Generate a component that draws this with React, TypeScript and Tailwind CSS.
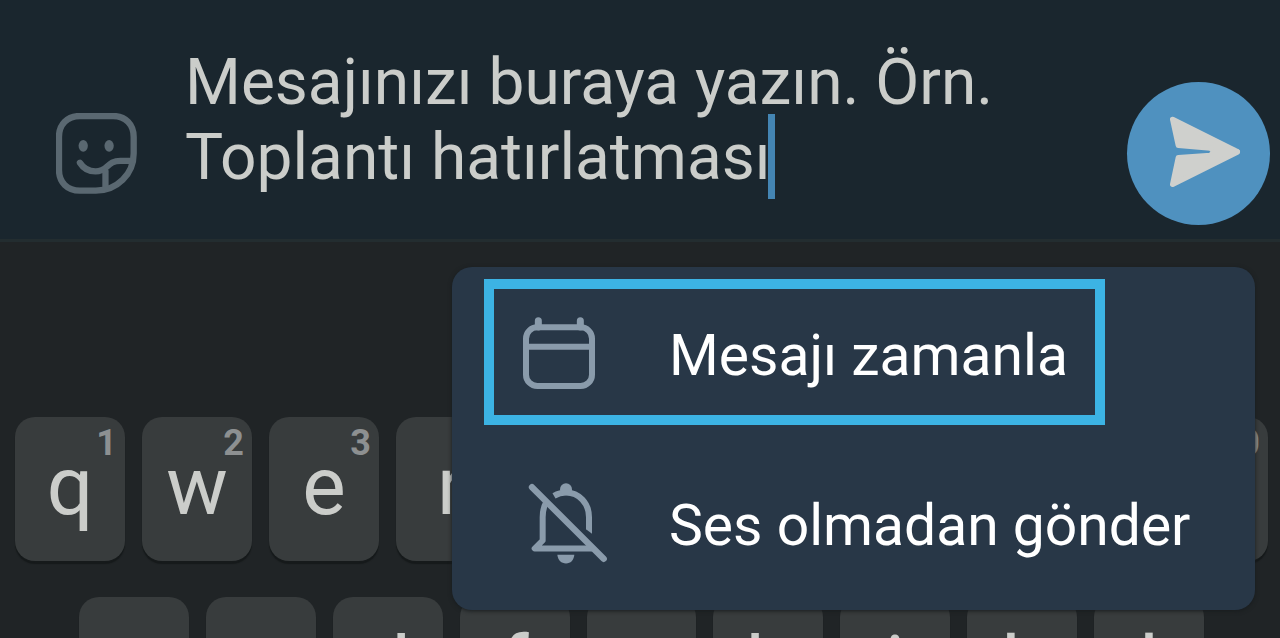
import React, { useState } from 'react';

const topRow = [
  { letter: 'q', digit: '1' },
  { letter: 'w', digit: '2' },
  { letter: 'e', digit: '3' },
  { letter: 'r', digit: '4' },
  { letter: 't', digit: '5' },
  { letter: 'y', digit: '6' },
  { letter: 'u', digit: '7' },
  { letter: 'i', digit: '8' },
  { letter: 'o', digit: '9' },
  { letter: 'p', digit: '0' },
];

const homeRow = ['a', 's', 'd', 'f', 'g', 'h', 'j', 'k', 'l'];

function StickerIcon() {
  return (
    <svg className="w-[81px] h-[81px]" viewBox="0 0 244 244" fill="none" stroke="currentColor" strokeWidth="19" strokeLinecap="round" strokeLinejoin="round">
      <path d="M120 234H72C34 234 9 209 9 172V72C9 34 34 9 72 9H172C209 9 234 34 234 72V122C234 184 184 234 120 234Z" />
      <path d="M72 150C82 166 98 176 119 176C158 176 152 144 194 144H229" />
      <path d="M149 176V226" />
      <ellipse cx="82" cy="99" rx="14" ry="18" fill="currentColor" stroke="none" />
      <ellipse cx="160" cy="99" rx="14" ry="18" fill="currentColor" stroke="none" />
    </svg>
  );
}

function SendIcon() {
  return (
    <svg className="w-full h-full" viewBox="0 0 429 429" fill="currentColor" stroke="currentColor" strokeWidth="16" strokeLinejoin="round">
      <path d="M137 112L331 209H262L250 198L154 190Z" />
      <path d="M137 307L331 210H262L250 220L154 227Z" />
    </svg>
  );
}

function CalendarIcon() {
  return (
    <svg className="w-[72px] h-[72px]" viewBox="0 0 216 216" fill="none" stroke="currentColor" strokeWidth="18" strokeLinecap="round">
      <rect x="9" y="31" width="198" height="176" rx="34" />
      <path d="M9 89H207" />
      <path d="M46 11V30M172 11V30" strokeWidth="21" />
    </svg>
  );
}

function BellOffIcon() {
  return (
    <svg className="w-[84px] h-[81px]" viewBox="-18 0 252 242" fill="none" stroke="currentColor" strokeWidth="18" strokeLinejoin="round">
      <path d="M75 38C87 31 98 28 111 28C150 28 180 60 180 102V138" />
      <path d="M171 137V138L189 152V137Z" fill="currentColor" stroke="none" />
      <path d="M51 59C44 71 41 84 41 102V172L17 196H190" />
      <circle cx="111" cy="18" r="18" fill="currentColor" stroke="none" />
      <path d="M85 215H136C134 232 125 241 111 241C97 241 87 232 85 215Z" fill="currentColor" stroke="none" />
      <path d="M9 12L224 227" strokeWidth="19" strokeLinecap="round" />
    </svg>
  );
}

function Key({ letter, digit }: { letter: string; digit?: string }) {
  return (
    <button
      type="button"
      className="relative flex-1 min-w-0 h-36 pb-1.5 rounded-[20px] bg-[#383c3d] text-[#cbcdca] text-[82px] leading-[136px] text-center shadow-[0_3px_1px_#161a1b]"
    >
      {letter}
      {digit && (
        <span className="absolute top-1 right-2 text-4xl leading-[44px] font-bold text-[#8d9091]">{digit}</span>
      )}
    </button>
  );
}

export default function App() {
  const [message, setMessage] = useState('Mesajınızı buraya yazın. Örn.\nToplantı hatırlatması');

  return (
    <div className="h-screen overflow-hidden flex flex-col bg-[#202426] font-[Roboto,sans-serif]">
      <header className="flex items-end pt-[45px] pb-[14px] pl-14 pr-[10px] bg-[#1a262e] border-b-3 border-[#232d30]">
        <button type="button" aria-label="Çıkartmalar" className="mb-[31px] text-[#5a6871]">
          <StickerIcon />
        </button>
        <div className="relative flex-1 mb-[30px] ml-12">
          <textarea
            aria-label="Mesaj"
            rows={2}
            value={message}
            onChange={(e) => setMessage(e.target.value)}
            className="block w-full h-[150px] resize-none overflow-hidden bg-transparent outline-none text-[64px] leading-[75px] text-[#cbcdca]"
          />
          <span className="absolute left-[583px] top-[69px] w-[7px] h-[85px] bg-[#4485b3]" />
        </div>
        <button type="button" aria-label="Gönder" className="w-[143px] h-[143px] rounded-full bg-[#4f91bf] text-[#cfd0cd]">
          <SendIcon />
        </button>
      </header>

      <main className="relative flex-1 pt-[175px]">
        <div className="flex gap-[17px] pl-[15px] pr-3">
          {topRow.map((key) => (
            <Key key={key.letter} letter={key.letter} digit={key.digit} />
          ))}
        </div>
        <div className="flex gap-[17px] mt-9 pl-[79px] pr-[76px]">
          {homeRow.map((letter) => (
            <Key key={letter} letter={letter} />
          ))}
        </div>

        <div role="menu" className="absolute top-[25px] right-[25px] w-[803px] flex flex-col gap-6 pt-3 pb-[15px] pl-8 rounded-[20px] bg-[#283747] text-white text-[57px] shadow-[0_1px_4px_#181c1e]">
          <button type="button" role="menuitem" className="flex items-center gap-[62px] w-[621px] h-[146px] pt-0.5 pl-[29px] border-10 border-[#3cb3e4]">
            <span className="w-[84px] text-[#8a9bab]">
              <CalendarIcon />
            </span>
            <span className="pt-1.5">Mesajı zamanla</span>
          </button>
          <button type="button" role="menuitem" className="flex items-center gap-[62px] h-[146px] pt-0.5 pl-[29px] border-10 border-transparent">
            <span className="w-[84px] text-[#8a9bab]">
              <BellOffIcon />
            </span>
            <span className="pt-1.5">Ses olmadan gönder</span>
          </button>
        </div>
      </main>
    </div>
  );
}
